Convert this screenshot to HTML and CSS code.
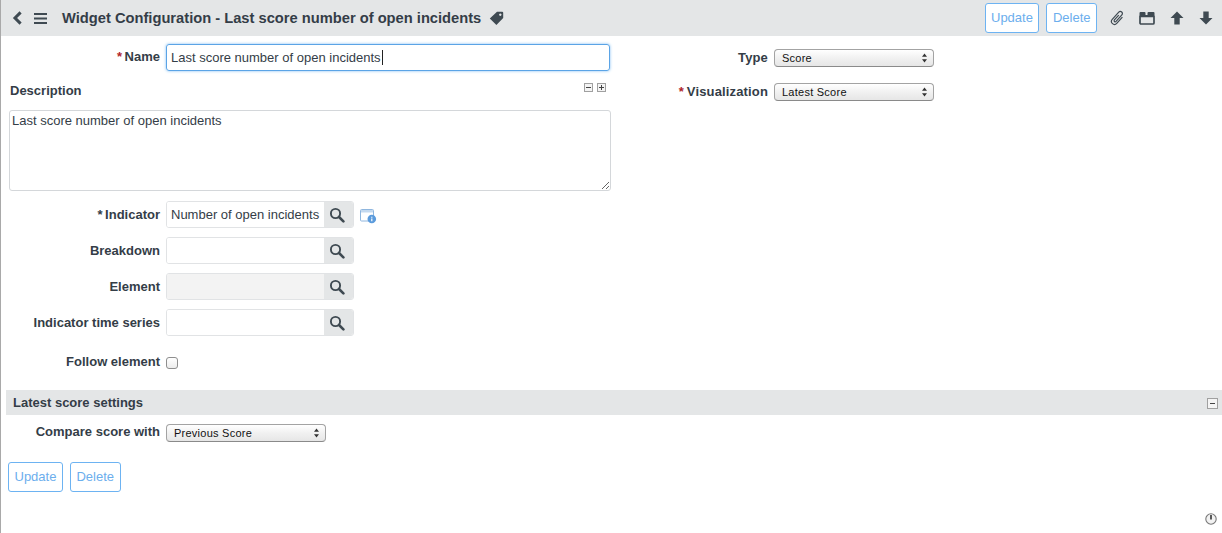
FILE: index.html
```html
<!DOCTYPE html>
<html lang="en">
<head>
    <meta charset="UTF-8">
    <meta name="viewport" content="width=device-width, initial-scale=1.0">
    <title>Widget Configuration</title>
    <link rel="stylesheet" href="styles.css">
</head>
<body>
    <svg class="defs" width="0" height="0">
        <symbol id="search" viewBox="0 0 16 16">
            <circle cx="6.5" cy="6.5" r="4.6" fill="none" stroke="#3f4a52" stroke-width="1.9"/>
            <path d="M10 10l4.4 4.4" stroke="#3f4a52" stroke-width="2.6" stroke-linecap="round"/>
        </symbol>
        <symbol id="arrows" viewBox="0 0 7 10">
            <path d="M3.5 0.5L6 3.8H1zM3.5 9.5L1 6.2H6z" fill="#333"/>
        </symbol>
    </svg>

    <div class="page">
        <header class="topbar">
            <div class="topbar_left">
                <svg class="ico_back" width="11" height="14" viewBox="0 0 11 14"><path d="M8.6 1.4L3 7l5.6 5.6" fill="none" stroke="#3f4a52" stroke-width="3"/></svg>
                <svg class="ico_menu" width="13" height="11" viewBox="0 0 13 11"><path d="M0 1h13M0 5.500h13M0 10h13" stroke="#3f4a52" stroke-width="2"/></svg>
                <h1>Widget Configuration - Last score number of open incidents</h1>
                <svg class="ico_tag" width="15" height="15" viewBox="0 0 15 15"><path d="M8 .8h5.200a1 1 0 0 1 1 1V7L7.400 14 .8 7.400zM11.300 2.500a1.200 1.200 0 1 0 .01 0z" fill="#3f4a52" fill-rule="evenodd"/></svg>
            </div>
            <div class="topbar_right">
                <a href="#" class="btn">Update</a>
                <a href="#" class="btn">Delete</a>
                <svg class="ico_clip" width="15" height="16" viewBox="0 0 15 16"><path d="M10.500 4v8.500a3 3 0 0 1-6 0V2.800a2.100 2.100 0 0 1 4.200 0v8.700a1.100 1.100 0 0 1-2.200 0V5" transform="rotate(42 7.500 8)" fill="none" stroke="#3f4a52" stroke-width="1.200"/></svg>
                <svg class="ico_folder" width="16" height="14" viewBox="0 0 16 14"><path d="M1 5.500h14V12a1 1 0 0 1-1 1H2a1 1 0 0 1-1-1z" fill="none" stroke="#3f4a52" stroke-width="1.700"/><path d="M.5 5V2a1 1 0 0 1 1-1h4a1 1 0 0 1 1 1v2h2V2a1 1 0 0 1 1-1h5a1 1 0 0 1 1 1v3z" fill="#3f4a52"/></svg>
                <svg class="ico_up" width="14" height="14" viewBox="0 0 14 14"><path d="M7 .5L13.500 7H9.700v6.500H4.300V7H.5z" fill="#3f4a52"/></svg>
                <svg class="ico_down" width="14" height="14" viewBox="0 0 14 14"><path d="M7 13.500L.5 7h3.800V.5h5.400V7h3.800z" fill="#3f4a52"/></svg>
            </div>
        </header>

        <form class="form">
            <div class="columns">
                <div class="col_left">
                    <div class="row row_name">
                        <label class="label"><span class="req">*</span> Name</label>
                        <div class="name_input">Last score number of open incidents<span class="caret"></span></div>
                    </div>
                    <div class="desc_head">
                        <label class="label_desc">Description</label>
                        <span class="toggles">
                            <span class="box box_minus"></span>
                            <span class="box box_plus"></span>
                        </span>
                    </div>
                    <textarea class="desc_text" readonly>Last score number of open incidents</textarea>
                    <div class="row row_ref">
                        <label class="label"><span class="req req_grey">*</span> Indicator</label>
                        <div class="lookup">
                            <input type="text" value="Number of open incidents" readonly>
                            <span class="lookup_btn"><svg width="16" height="16"><use href="#search"/></svg></span>
                        </div>
                        <svg class="ico_info" width="17" height="15" viewBox="0 0 17 15">
                            <rect x=".5" y=".5" width="13" height="11.500" rx="1" fill="#fff" stroke="#8fb6de"/>
                            <path d="M1 1h12v2.500H1z" fill="#c4d9ef"/>
                            <circle cx="11.800" cy="10" r="4.300" fill="#5b9bdc"/>
                            <path d="M11.800 7.800v1M11.800 9.600v2.700" stroke="#fff" stroke-width="1.200"/>
                        </svg>
                    </div>
                    <div class="row row_ref">
                        <label class="label">Breakdown</label>
                        <div class="lookup">
                            <input type="text" readonly>
                            <span class="lookup_btn"><svg width="16" height="16"><use href="#search"/></svg></span>
                        </div>
                    </div>
                    <div class="row row_ref">
                        <label class="label">Element</label>
                        <div class="lookup lookup_off">
                            <input type="text" readonly>
                            <span class="lookup_btn"><svg width="16" height="16"><use href="#search"/></svg></span>
                        </div>
                    </div>
                    <div class="row row_ref">
                        <label class="label">Indicator time series</label>
                        <div class="lookup">
                            <input type="text" readonly>
                            <span class="lookup_btn"><svg width="16" height="16"><use href="#search"/></svg></span>
                        </div>
                    </div>
                    <div class="row row_check">
                        <label class="label">Follow element</label>
                        <span class="check"></span>
                    </div>
                </div>

                <div class="col_right">
                    <div class="row row_select">
                        <label class="label">Type</label>
                        <div class="select select_wide">Score<svg width="7" height="10"><use href="#arrows"/></svg></div>
                    </div>
                    <div class="row row_select">
                        <label class="label"><span class="req">*</span> Visualization</label>
                        <div class="select select_wide">Latest Score<svg width="7" height="10"><use href="#arrows"/></svg></div>
                    </div>
                </div>
            </div>

            <div class="section_bar">
                <span>Latest score settings</span>
                <span class="box box_minus"></span>
            </div>

            <div class="row row_compare">
                <label class="label">Compare score with</label>
                <div class="select select_compare">Previous Score<svg width="7" height="10"><use href="#arrows"/></svg></div>
            </div>

            <div class="actions">
                <a href="#" class="btn">Update</a>
                <a href="#" class="btn">Delete</a>
            </div>
        </form>

        <svg class="ico_clock" width="12" height="12" viewBox="0 0 12 12">
            <circle cx="6" cy="6" r="5.200" fill="#f2f2f2" stroke="#777" stroke-width="1.100"/>
            <path d="M6 2v4.500" stroke="#333" stroke-width="1.600"/>
        </svg>
    </div>
</body>
</html>
```

FILE: styles.css
```css
* {
    margin: 0;
    padding: 0;
    box-sizing: border-box;
}

html, body {
    height: 100%;
}

body {
    font-family: "Liberation Sans", Arial, sans-serif;
    font-size: 13px;
    color: #343d47;
    background: #fff;
}

.defs {
    position: absolute;
}

.page {
    position: relative;
    height: 533px;
    border-left: 1px solid #a9a9a9;
    overflow: hidden;
}

/* top bar */
.topbar {
    display: flex;
    justify-content: space-between;
    align-items: center;
    height: 36px;
    background: #e4e6e7;
    padding: 0 9px 0 11px;
}

.topbar_left,
.topbar_right {
    display: flex;
    align-items: center;
}

.topbar h1 {
    font-size: 14.7px;
    font-weight: bold;
    line-height: 18px;
    color: #343d47;
    margin: 0 8px 0 15px;
}

.ico_menu {
    margin-left: 11px;
}

.ico_clip {
    margin-left: 13px;
}

.ico_folder {
    margin-left: 14px;
}

.ico_up {
    margin-left: 15px;
}

.ico_down {
    margin-left: 15px;
}

.btn {
    display: inline-block;
    height: 30px;
    line-height: 28px;
    padding: 0 5.500px;
    margin-left: 7px;
    font-size: 13px;
    color: #6caeed;
    text-decoration: none;
    background: #fff;
    border: 1px solid #6db3f2;
    border-radius: 3px;
}

/* form */
.form {
    padding-top: 8px;
}

.columns {
    display: flex;
}

.col_left {
    width: 610px;
}

.row {
    display: flex;
    align-items: center;
}

.label {
    flex: none;
    width: 159px;
    text-align: right;
    font-weight: bold;
    font-size: 13px;
    color: #343d47;
    margin-right: 6px;
}

.req {
    color: #b0262b;
    margin-right: -1px;
}

.req_grey {
    color: #343d47;
}

.row_name {
    height: 27px;
}

.row_name .label {
    margin-top: -2px;
}

.name_input {
    width: 444px;
    height: 27px;
    line-height: 25px;
    padding-left: 4px;
    font-size: 13px;
    color: #343d47;
    border: 1px solid #5ba4e6;
    border-radius: 3px;
    box-shadow: 0 0 3px #7fbcf2;
}

.caret {
    display: inline-block;
    width: 1px;
    height: 15px;
    margin-left: 1px;
    background: #222;
    vertical-align: -3px;
}

.desc_head {
    display: flex;
    justify-content: space-between;
    align-items: center;
    height: 39px;
    padding: 0 5px 0 9px;
}

.label_desc {
    font-weight: bold;
    font-size: 13px;
}

.toggles {
    display: flex;
    gap: 4px;
    margin-top: -6px;
}

.box {
    position: relative;
    display: block;
    width: 9px;
    height: 9px;
    border: 1px solid #a0a0a0;
    background: #f4f4f4;
}

.box_minus::after,
.box_plus::after {
    content: "";
    position: absolute;
    left: 1px;
    top: 3px;
    width: 5px;
    height: 1px;
    background: #444;
}

.box_plus::before {
    content: "";
    position: absolute;
    left: 3px;
    top: 1px;
    width: 1px;
    height: 5px;
    background: #444;
}

.desc_text {
    display: block;
    width: 602px;
    height: 81px;
    margin-left: 8px;
    padding: 2px;
    font-family: inherit;
    font-size: 13px;
    line-height: 15px;
    color: #343d47;
    border: 1px solid #d4d7da;
    border-radius: 3px;
    outline: none;
}

.row_ref {
    height: 27px;
    margin-top: 9px;
}

.desc_text + .row_ref {
    margin-top: 10px;
}

.lookup {
    display: flex;
    width: 188px;
    height: 27px;
    border: 1px solid #e1e3e5;
    border-radius: 3px;
    overflow: hidden;
}

.lookup input {
    flex: 1;
    min-width: 0;
    padding-left: 4px;
    font-family: inherit;
    font-size: 13px;
    color: #343d47;
    border: none;
    outline: none;
    background: #fff;
}

.lookup_off input {
    background: #f3f3f3;
}

.lookup_btn {
    display: flex;
    align-items: center;
    justify-content: center;
    flex: none;
    width: 29px;
    padding-right: 3px;
    background: #e4e6e7;
}

.ico_info {
    margin-left: 6px;
    margin-top: 3px;
}

.row_check {
    height: 18px;
    margin-top: 16px;
}

.check {
    width: 12px;
    height: 12px;
    margin-top: 3px;
    border: 1px solid #8e8e8e;
    border-radius: 3px;
    background: linear-gradient(#fff, #ececec);
}

/* right column selects */
.col_right {
    padding-top: 4px;
}

.row_select {
    height: 20px;
}

.row_select + .row_select {
    margin-top: 14px;
}

.col_right .label {
    width: 157px;
    margin-top: -2px;
    letter-spacing: 0.15px;
}

.select {
    display: flex;
    justify-content: space-between;
    align-items: center;
    height: 18px;
    padding: 0 5px 0 7px;
    font-size: 11px;
    color: #111;
    letter-spacing: 0.25px;
    border: 1px solid #a3a3a3;
    border-bottom-color: #8a8a8a;
    border-radius: 4px;
    background: linear-gradient(#fff, #f1f1f1 50%, #e6e6e6);
}

.select_wide {
    width: 160px;
}

.select_compare {
    width: 160px;
    margin-top: 2px;
}

/* section */
.section_bar {
    display: flex;
    justify-content: space-between;
    align-items: center;
    height: 25px;
    margin: 20px 0 0 5px;
    padding: 0 4px 0 7px;
    font-weight: bold;
    font-size: 13px;
    background: #e4e6e7;
}

.section_bar .box {
    width: 11px;
    height: 11px;
    margin-top: 2px;
}

.section_bar .box::after {
    left: 2px;
    top: 4px;
}

.row_compare {
    height: 20px;
    margin-top: 7px;
}

.row_compare .label {
    margin-top: -1px;
}

.actions {
    display: flex;
    margin-top: 20px;
}

.ico_clock {
    position: absolute;
    right: 5px;
    bottom: 8px;
}
```
